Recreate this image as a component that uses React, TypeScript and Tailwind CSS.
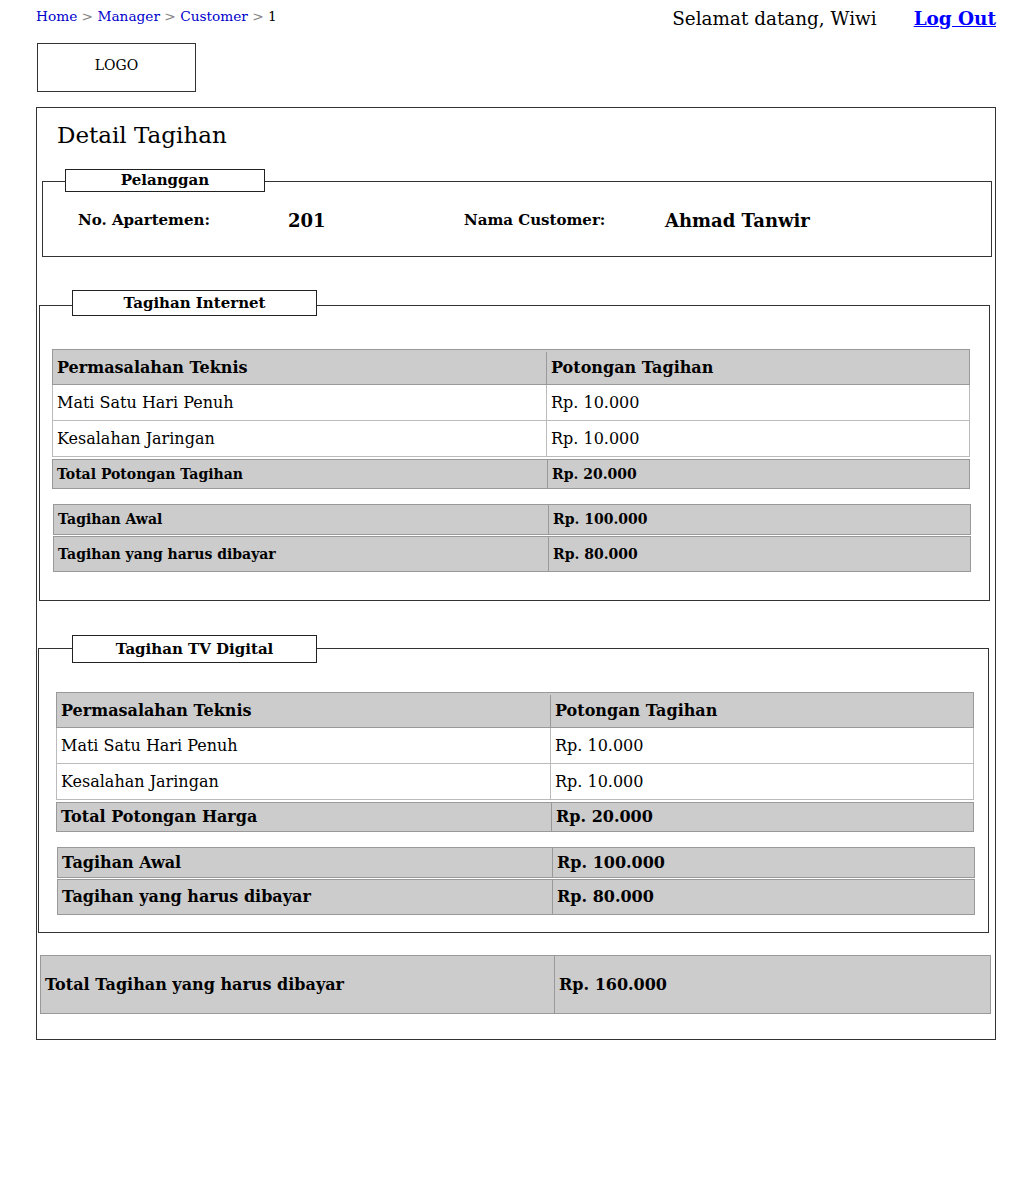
const SERIF = "font-['DejaVu_Serif',serif]";

type Row = { label: string; value: string };

function Legend({ text, className }: { text: string; className: string }) {
  return (
    <div className={`absolute bg-white border border-[#222] flex items-center justify-center text-[15px] font-bold text-black ${className}`}>
      {text}
    </div>
  );
}

function Cell({ children, w, className = '' }: { children: React.ReactNode; w: string; className?: string }) {
  return <div className={`flex items-center pl-[4px] ${w} ${className}`}>{children}</div>;
}

function BillTable({
  rows,
  total,
  awal,
  bayar,
  small,
  className,
  className2,
}: {
  rows: Row[];
  total: Row;
  awal: string;
  bayar: string;
  small: boolean;
  className: string;
  className2: string;
}) {
  const sumText = small ? 'text-[14px]' : 'text-[16px]';
  return (
    <div>
      <div className={`flex flex-col ${className}`}>
        <div className="flex h-[36px] bg-[#cccccc] border border-[#999] text-[16px] font-bold pt-[2px]">
          <Cell w="w-[494px]" className="border-r border-[#999]">Permasalahan Teknis</Cell>
          <Cell w="flex-1">Potongan Tagihan</Cell>
        </div>
        {rows.map((r) => (
          <div key={r.label} className="flex h-[36px] bg-white border border-t-0 border-[#bbb] text-[16px]">
            <Cell w="w-[494px]" className="border-r border-[#bbb]">{r.label}</Cell>
            <Cell w="flex-1">{r.value}</Cell>
          </div>
        ))}
        <div className={`flex h-[30px] mt-[2px] bg-[#cccccc] border border-[#999] font-bold ${sumText}`}>
          <Cell w="w-[495px]" className="border-r border-[#999]">{total.label}</Cell>
          <Cell w="flex-1">{total.value}</Cell>
        </div>
      </div>
      <div className={`flex flex-col mt-[15px] font-bold ${sumText} ${className2}`}>
        <div className="flex h-[31px] bg-[#cccccc] border border-[#999]">
          <Cell w="w-[495px]" className="border-r border-[#999]">Tagihan Awal</Cell>
          <Cell w="flex-1">{awal}</Cell>
        </div>
        <div className="flex h-[36px] mt-[1px] bg-[#cccccc] border border-[#999]">
          <Cell w="w-[495px]" className="border-r border-[#999]">Tagihan yang harus dibayar</Cell>
          <Cell w="flex-1">{bayar}</Cell>
        </div>
      </div>
    </div>
  );
}

const ROWS: Row[] = [
  { label: 'Mati Satu Hari Penuh', value: 'Rp. 10.000' },
  { label: 'Kesalahan Jaringan', value: 'Rp. 10.000' },
];

export default function App() {
  return (
    <div className={`min-h-[1200px] bg-white text-black ${SERIF}`}>
      {/* top bar */}
      <div className="flex justify-between pl-[36px] pr-[28px] pt-[8px] h-[43px]">
        <div className="text-[13.7px] leading-[16px]">
          <span className="text-[#0000cc]">Home</span>
          <span className="text-[#888]"> &gt; </span>
          <span className="text-[#0000cc]">Manager</span>
          <span className="text-[#888]"> &gt; </span>
          <span className="text-[#0000cc]">Customer</span>
          <span className="text-[#888]"> &gt; </span>
          <span>1</span>
        </div>
        <div className="flex text-[18.4px] leading-[22px] gap-[37px]">
          <span>Selamat datang, Wiwi</span>
          <span className="text-[#0000ff] font-bold underline">Log Out</span>
        </div>
      </div>

      {/* logo */}
      <div className="ml-[37px] w-[159px] h-[49px] border border-[#333] flex justify-center pt-[13px] text-[14px] leading-[16px]">
        LOGO
      </div>

      {/* main panel */}
      <div className="ml-[36px] mt-[15px] w-[960px] h-[933px] border border-[#333] pt-[14px]">
        <h1 className="pl-[20px] text-[23px] leading-[26px]">Detail Tagihan</h1>

        {/* Pelanggan */}
        <div className="relative ml-[5px] mt-[33px] w-[950px] h-[76px] border border-[#333]">
          <Legend text="Pelanggan" className="left-[22px] -top-[13px] w-[200px] h-[23px]" />
          <div className="flex items-center h-full pt-[3px] font-bold">
            <span className="ml-[35px] w-[210px] text-[15px]">No. Apartemen:</span>
            <span className="w-[176px] text-[18px]">201</span>
            <span className="w-[201px] text-[15px]">Nama Customer:</span>
            <span className="whitespace-nowrap text-[18px]">Ahmad Tanwir</span>
          </div>
        </div>

        {/* Tagihan Internet */}
        <div className="relative ml-[2px] mt-[48px] w-[951px] h-[296px] border border-[#333] pt-[43px]">
          <Legend text="Tagihan Internet" className="left-[32px] -top-[16px] w-[245px] h-[26px]" />
          <BillTable
            rows={ROWS}
            total={{ label: 'Total Potongan Tagihan', value: 'Rp. 20.000' }}
            awal="Rp. 100.000"
            bayar="Rp. 80.000"
            small
            className="ml-[12px] w-[918px]"
            className2="ml-[13px] w-[918px]"
          />
        </div>

        {/* Tagihan TV Digital */}
        <div className="relative ml-[1px] mt-[47px] w-[951px] h-[285px] border border-[#333] pt-[43px]">
          <Legend text="Tagihan TV Digital" className="left-[33px] -top-[14px] w-[245px] h-[28px]" />
          <BillTable
            rows={ROWS}
            total={{ label: 'Total Potongan Harga', value: 'Rp. 20.000' }}
            awal="Rp. 100.000"
            bayar="Rp. 80.000"
            small={false}
            className="ml-[17px] w-[918px]"
            className2="ml-[18px] w-[918px]"
          />
        </div>

        {/* Grand total */}
        <div className="flex ml-[3px] mt-[22px] w-[951px] h-[59px] bg-[#cccccc] border border-[#999] text-[16px] font-bold">
          <div className="w-[514px] border-r border-[#999] flex items-center pl-[4px]">Total Tagihan yang harus dibayar</div>
          <div className="flex-1 flex items-center pl-[4px]">Rp. 160.000</div>
        </div>
      </div>
    </div>
  );
}
